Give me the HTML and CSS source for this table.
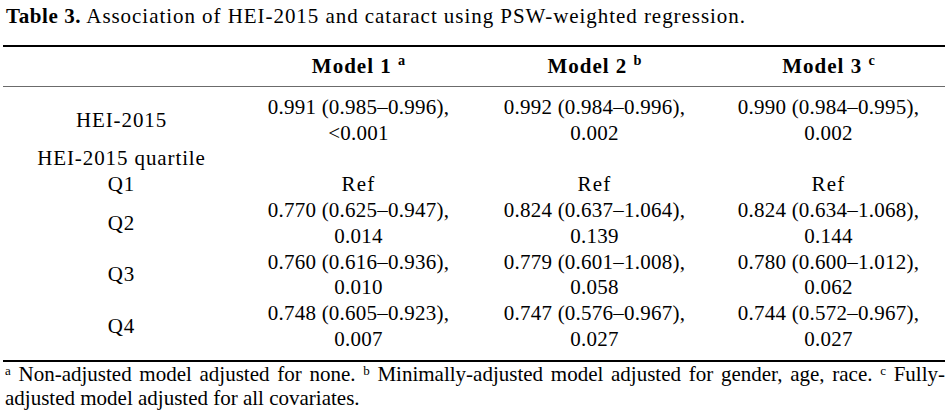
FILE: index.html
```html
<!DOCTYPE html>
<html lang="en">
<head>
<meta charset="utf-8">
<title>Table 3</title>
<link rel="stylesheet" href="styles.css">
</head>
<body>
<div class="page">
  <p class="caption"><b>Table 3.</b> Association of HEI-2015 and cataract using PSW-weighted regression.</p>
  <table class="tbl">
    <colgroup>
      <col class="c1"><col class="c2"><col class="c3"><col class="c4">
    </colgroup>
    <thead>
      <tr>
        <th></th>
        <th>Model 1 <sup>a</sup></th>
        <th>Model 2 <sup>b</sup></th>
        <th>Model 3 <sup>c</sup></th>
      </tr>
    </thead>
    <tbody>
      <tr class="first">
        <td class="lbl">HEI-2015</td>
        <td>0.991 (0.985–0.996),<br>&lt;0.001</td>
        <td>0.992 (0.984–0.996),<br>0.002</td>
        <td>0.990 (0.984–0.995),<br>0.002</td>
      </tr>
      <tr>
        <td class="lbl">HEI-2015 quartile</td>
        <td></td><td></td><td></td>
      </tr>
      <tr>
        <td class="lbl">Q1</td>
        <td class="ref">Ref</td>
        <td class="ref">Ref</td>
        <td class="ref">Ref</td>
      </tr>
      <tr>
        <td class="lbl">Q2</td>
        <td>0.770 (0.625–0.947),<br>0.014</td>
        <td>0.824 (0.637–1.064),<br>0.139</td>
        <td>0.824 (0.634–1.068),<br>0.144</td>
      </tr>
      <tr>
        <td class="lbl">Q3</td>
        <td>0.760 (0.616–0.936),<br>0.010</td>
        <td>0.779 (0.601–1.008),<br>0.058</td>
        <td>0.780 (0.600–1.012),<br>0.062</td>
      </tr>
      <tr class="last">
        <td class="lbl">Q4</td>
        <td>0.748 (0.605–0.923),<br>0.007</td>
        <td>0.747 (0.576–0.967),<br>0.027</td>
        <td>0.744 (0.572–0.967),<br>0.027</td>
      </tr>
    </tbody>
  </table>
  <div class="notes">
    <p class="note-line"><sup>a</sup> Non-adjusted model adjusted for none. <sup>b</sup> Minimally-adjusted model adjusted for gender, age, race. <sup>c</sup> Fully-</p>
    <p class="note-end">adjusted model adjusted for all covariates.</p>
  </div>
</div>
</body>
</html>
```

FILE: styles.css
```css
html, body {
  margin: 0;
  padding: 0;
  background: #ffffff;
}

body {
  font-family: "Liberation Serif", "Times New Roman", serif;
  color: #000000;
}

.page {
  width: 942px;
  padding: 4px 0 0 3px;
}

.caption {
  margin: 0 0 16px 3px;
  font-size: 21px;
  line-height: 25px;
  letter-spacing: 0.95px;
}

.caption b {
  letter-spacing: 0.6px;
}

.tbl {
  width: 942px;
  border-collapse: collapse;
  table-layout: fixed;
  font-size: 21px;
  line-height: 25.8px;
  border-top: 2px solid #000;
  border-bottom: 2px solid #000;
}

.c1 { width: 237px; }
.c2 { width: 237px; }
.c3 { width: 235px; }
.c4 { width: 233px; }

.tbl th,
.tbl td {
  padding: 0;
  text-align: center;
  vertical-align: middle;
  letter-spacing: 0.25px;
}

.tbl thead th {
  font-weight: bold;
  padding: 7px 0 6px;
  letter-spacing: 1px;
  border-bottom: 1px solid #6b6b6b;
}

.tbl td.lbl {
  letter-spacing: 0.9px;
}

.tbl td.ref {
  letter-spacing: 1.2px;
}

.tbl sup {
  font-size: 0.68em;
  line-height: 0;
  vertical-align: 0.55em;
  letter-spacing: 0;
}

.tbl tbody tr.first td {
  padding-top: 8px;
}

.tbl tbody tr.last td {
  padding-bottom: 7px;
}

.notes {
  margin: 0 0 0 2px;
  font-size: 21px;
  line-height: 24px;
}

.note-line {
  margin: 0;
  text-align: justify;
  text-align-last: justify;
}

.note-end {
  margin: 0;
}

.notes sup {
  font-size: 0.62em;
  line-height: 0;
  vertical-align: 0.5em;
}
```
